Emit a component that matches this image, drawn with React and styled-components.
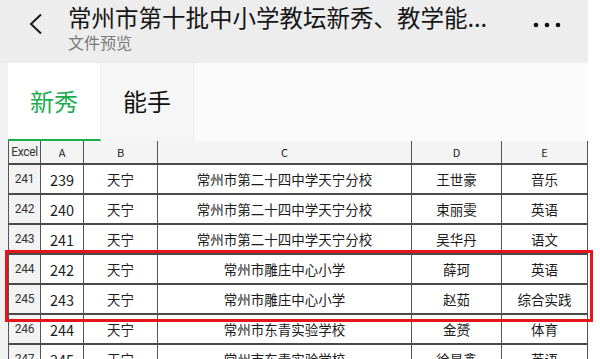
import styled, { createGlobalStyle } from 'styled-components';

const GlobalStyle = createGlobalStyle`
  body {
    margin: 0;
    background: #fff;
    font-family: "Noto Sans CJK SC", "Noto Sans", sans-serif;
  }
`;

const GREEN = '#1aad4f';

const rows = [
  ['241', '239', '天宁', '常州市第二十四中学天宁分校', '王世豪', '音乐'],
  ['242', '240', '天宁', '常州市第二十四中学天宁分校', '束丽雯', '英语'],
  ['243', '241', '天宁', '常州市第二十四中学天宁分校', '吴华丹', '语文'],
  ['244', '242', '天宁', '常州市雕庄中心小学', '薛珂', '英语'],
  ['245', '243', '天宁', '常州市雕庄中心小学', '赵茹', '综合实践'],
  ['246', '244', '天宁', '常州市东青实验学校', '金赟', '体育'],
  ['247', '245', '天宁', '常州市东青实验学校', '徐昊鑫', '英语'],
];

export default function App() {
  return (
    <>
      <GlobalStyle />
      <Screen>
        <Main>
          <Header>
            <Back>
              <svg width="16" height="22" viewBox="0 0 16 22">
                <path d="M13 1.5 L3 11 L13 20.5" fill="none" stroke="#1a1a1a" strokeWidth="2" />
              </svg>
            </Back>
            <TitleBlock>
              <Title>常州市第十批中小学教坛新秀、教学能...</Title>
              <Subtitle>文件预览</Subtitle>
            </TitleBlock>
            <More>
              <svg width="30" height="6" viewBox="0 0 30 6">
                <circle cx="3" cy="3" r="2.3" fill="#111" />
                <circle cx="14" cy="3" r="2.3" fill="#111" />
                <circle cx="25" cy="3" r="2.3" fill="#111" />
              </svg>
            </More>
          </Header>

          <Body>
            <TabBar>
              <Tab $active>新秀</Tab>
              <Tab>能手</Tab>
            </TabBar>

            <Sheet>
              <Row $head>
                <Cell $excel>Excel</Cell>
                <Cell>A</Cell>
                <Cell>B</Cell>
                <Cell>C</Cell>
                <Cell>D</Cell>
                <Cell>E</Cell>
              </Row>
              {rows.map((r) => (
                <Row key={r[0]}>
                  <Cell $excel>{r[0]}</Cell>
                  <Cell $num>{r[1]}</Cell>
                  <Cell>{r[2]}</Cell>
                  <Cell>{r[3]}</Cell>
                  <Cell>{r[4]}</Cell>
                  <Cell>{r[5]}</Cell>
                </Row>
              ))}
            </Sheet>
          </Body>
        </Main>
        <Highlight />
      </Screen>
    </>
  );
}

const Screen = styled.div`
  position: relative;
  width: 600px;
  height: 359px;
  overflow: hidden;
  display: flex;
  background: #fff;
`;

const Main = styled.div`
  width: 588px;
  display: flex;
  flex-direction: column;
  background: #ededed;
`;

const Header = styled.header`
  height: 63px;
  flex-shrink: 0;
  display: flex;
  align-items: flex-start;

  svg {
    display: block;
  }
`;

const Back = styled.div`
  width: 68px;
  padding: 13px 0 0 28px;
  box-sizing: border-box;
`;

const TitleBlock = styled.div`
  flex: 1;
  min-width: 0;
`;

const Title = styled.div`
  font-size: 23.5px;
  line-height: 34px;
  color: #161616;
  white-space: nowrap;
`;

const Subtitle = styled.div`
  font-size: 16px;
  line-height: 16px;
  color: #7a7a7a;
`;

const More = styled.div`
  width: 55px;
  padding-top: 22px;
`;

const Body = styled.div`
  flex: 1;
  padding-left: 8px;
  background: #f2f2f2;
  display: flex;
  flex-direction: column;
`;

const TabBar = styled.div`
  height: 78px;
  display: flex;
  background: #fbfbfb;
`;

const Tab = styled.div`
  width: 93px;
  box-sizing: border-box;
  display: flex;
  align-items: center;
  justify-content: center;
  font-size: 24px;
  color: ${(p) => (p.$active ? GREEN : '#111')};
  background: ${(p) => (p.$active ? '#fff' : '#f6f6f6')};
  border-bottom: 2px solid ${(p) => (p.$active ? GREEN : 'transparent')};
  border-right: 1px solid #eeeeee;
  padding-bottom: 1px;
`;

const Sheet = styled.div`
  background: #fff;
  flex: 1;
  border-left: 1px solid #555;
`;

const Row = styled.div`
  display: grid;
  grid-template-columns: 32px 43px 74px 254px 90px 86px;
  height: ${(p) => (p.$head ? '24px' : '30px')};
  box-sizing: border-box;
  border-bottom: 2px solid #4a4a4a;
  background: ${(p) => (p.$head ? '#f4f4f4' : '#fff')};
  font-size: ${(p) => (p.$head ? '11px' : '13.5px')};
  color: #222;
`;

const Cell = styled.div`
  display: flex;
  align-items: center;
  justify-content: center;
  border-right: 1px solid #555;
  white-space: nowrap;
  font-family: ${(p) => (p.$excel ? 'Roboto, "Noto Sans CJK SC", sans-serif' : '"Noto Sans CJK SC", sans-serif')};
  font-size: ${(p) => (p.$excel ? '12px' : p.$num ? '14.5px' : 'inherit')};
  background: ${(p) => (p.$excel ? '#f3f3f3' : 'transparent')};
  color: ${(p) => (p.$excel ? '#333' : '#1c1c1c')};
  letter-spacing: ${(p) => (p.$excel ? '-0.3px' : '0')};
`;

const Highlight = styled.div`
  position: absolute;
  left: 5px;
  top: 250px;
  width: 588px;
  height: 72px;
  box-sizing: border-box;
  border: 3px solid #e8141b;
  pointer-events: none;
`;
